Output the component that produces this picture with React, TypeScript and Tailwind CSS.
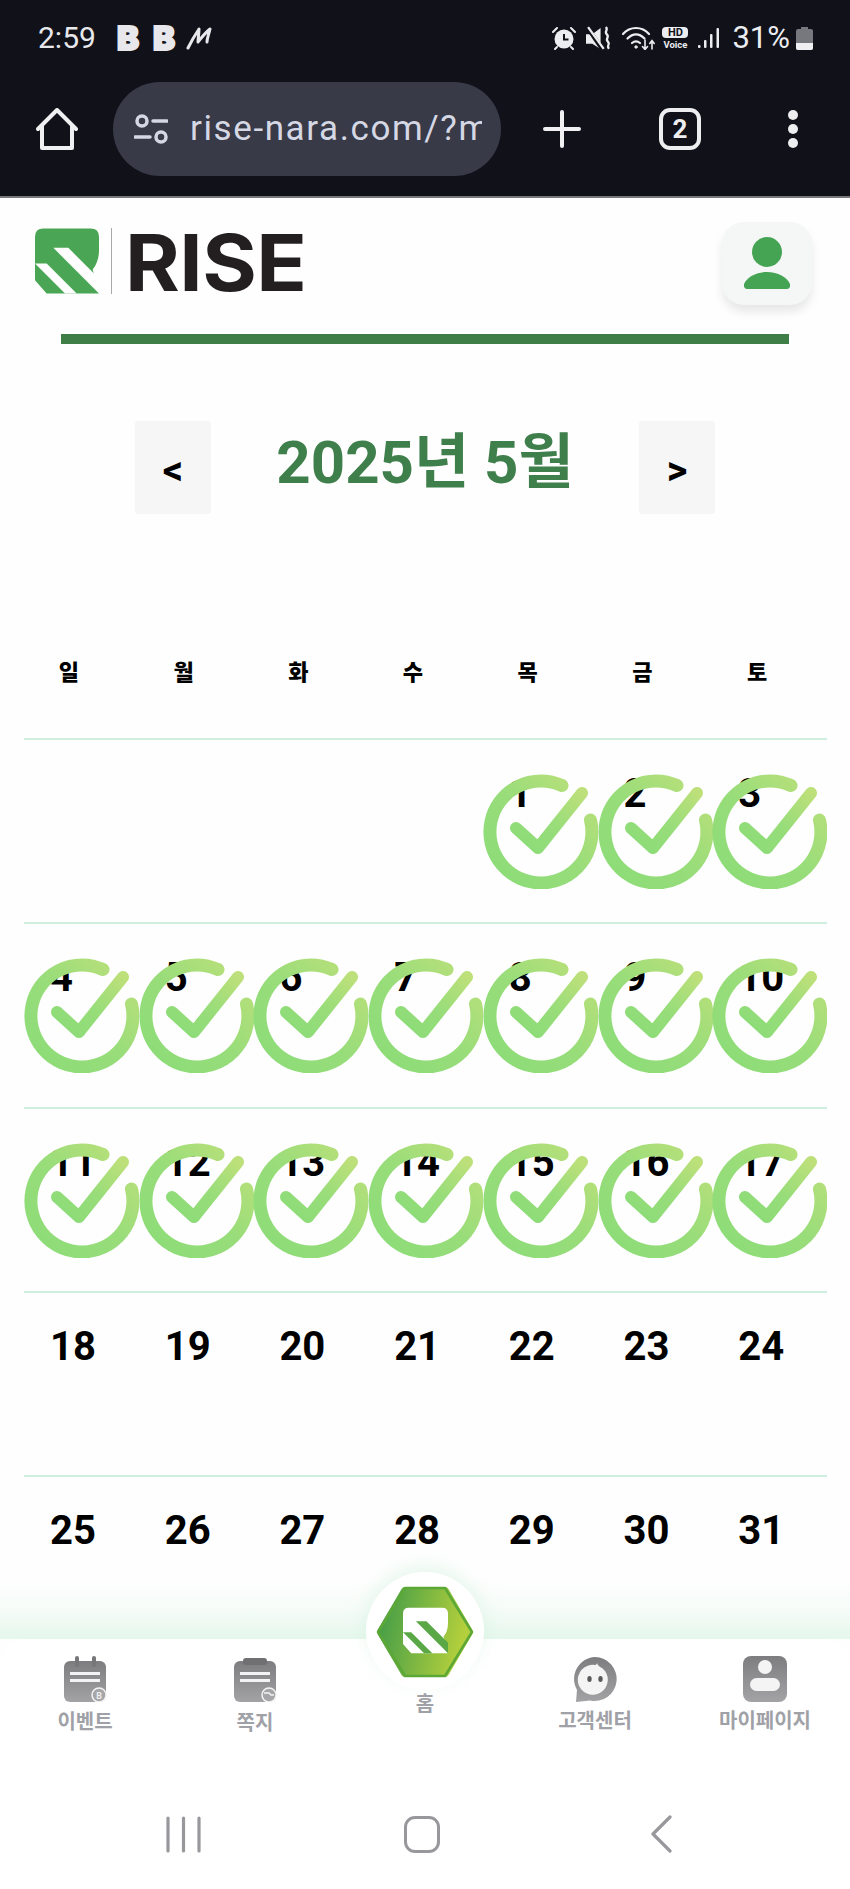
// App.tsx
import React from 'react';

const KR = "font-['Roboto','Noto_Sans_CJK_KR',sans-serif]";

// --- small drawings ---

const RMark = ({ body, stripe, className }: { body: string; stripe: string; className: string }) => (
  <svg viewBox="105 85 192 195" className={className}>
    <path
      d="M105 110Q105 85 130 85H272Q297 85 297 110V150Q297 185 278 208L297 280H140L105 240Z"
      fill={body}
    />
    <path d="M160 143H205L302 240V285Z" fill={stripe} />
    <path d="M105 190H140L230 280H195L105 190Z" fill={stripe} />
  </svg>
);

const CheckMark = () => (
  <svg viewBox="0 0 115 115" className="absolute left-0 top-[34px] w-[115px] h-[115px]" fill="none">
    <defs>
      <linearGradient id="chk" x1="0" y1="1" x2="1" y2="0">
        <stop offset="0" stopColor="#8bdc78" />
        <stop offset="0.5" stopColor="#98dd7a" />
        <stop offset="1" stopColor="#bde07a" />
      </linearGradient>
    </defs>
    <path d="M79 11.500A51 51 0 1 0 107.500 46" stroke="url(#chk)" strokeWidth="13" strokeLinecap="round" />
    <path d="M33 54L55 74L99 19" stroke="url(#chk)" strokeWidth="12" strokeLinecap="round" strokeLinejoin="round" />
  </svg>
);

const StatusIcons = () => (
  <div className="flex items-center">
    {/* alarm */}
    <svg viewBox="0 0 24 24" className="w-[24px] h-[24px]">
      <circle cx="12" cy="13" r="9.500" fill="#ecedf0" />
      <path d="M12 8v5.500h4.500" fill="none" stroke="#11111a" strokeWidth="2" />
      <path d="M1 6l4-4M23 6l-4-4M5 21l-2 2M19 21l2 2" stroke="#ecedf0" strokeWidth="2" strokeLinecap="round" />
    </svg>
    {/* mute + vibrate */}
    <svg viewBox="0 0 24 24" className="w-[25px] h-[25px] ml-[10px]">
      <path d="M0 8h6l8-6v20l-8-5H0Z" fill="#ecedf0" />
      <path d="M1 1l15 22" stroke="#11111a" strokeWidth="4" />
      <path d="M2 1l15 21" stroke="#ecedf0" strokeWidth="2.200" />
      <path d="M19 1c3 3-2 4 1 7s-2 4 1 7-2 3 1 7" fill="none" stroke="#ecedf0" strokeWidth="2.200" />
    </svg>
    {/* wifi */}
    <svg viewBox="0 0 34 24" className="w-[34px] h-[24px] ml-[11px]" fill="none" stroke="#ecedf0" strokeLinecap="round">
      <path d="M1 8C8 0 20 0 27 8" strokeWidth="2.200" />
      <path d="M5.500 12.500C11 7 17 7 22.500 12.500" strokeWidth="2.200" />
      <path d="M10 17c3-2.500 5-2.500 8 0" strokeWidth="2.200" />
      <circle cx="14" cy="21" r="1.200" fill="#ecedf0" />
      <path d="M23 14v9M20.500 20.500l2.500 3 2.500-3M30 23v-8M27.800 17.500l2.200-3 2.200 3" strokeWidth="1.600" />
    </svg>
    {/* HD voice */}
    <div className="ml-[6px] w-[26px] flex flex-col items-center font-['Roboto',sans-serif] font-bold text-[#ecedf0] leading-none">
      <span className="w-[26px] h-[11px] rounded-[4px] bg-[#ecedf0] text-[#11111a] text-[11px] leading-[11px] text-center">HD</span>
      <span className="text-[9.5px] leading-[11px] mt-[1px]">Voice</span>
    </div>
    {/* signal */}
    <svg viewBox="0 0 22 24" className="w-[22px] h-[24px] ml-[10px]" fill="#ecedf0">
      <rect x="0" y="19" width="2.500" height="3" rx="1" />
      <rect x="6" y="14" width="2.500" height="8" rx="1" />
      <rect x="12" y="8" width="2.500" height="14" rx="1" />
      <rect x="18.500" y="2" width="2.500" height="20" rx="1" />
    </svg>
    <span className="ml-[12px] text-[31px] leading-[30px] text-[#ecedf0]">31%</span>
    {/* battery */}
    <svg viewBox="0 0 17 24" className="w-[17px] h-[24px] ml-[6px]">
      <path d="M5 1h7v2h3a2 2 0 0 1 2 2v17a2 2 0 0 1-2 2H2a2 2 0 0 1-2-2V5a2 2 0 0 1 2-2h3Z" fill="#77787d" />
      <path d="M0 17h17v5a2 2 0 0 1-2 2H2a2 2 0 0 1-2-2Z" fill="#f0f0f2" />
    </svg>
  </div>
);

const BrowserChrome = () => (
  <div className="h-[198px] shrink-0 bg-[#11111a] border-b-2 border-[#77777c] font-['Roboto',sans-serif]">
    <div className="h-[82px] pl-[38px] pr-[37px] pb-[6px] flex items-center justify-between">
      <div className="flex items-center text-[#e8e8ec]">
        <span className="text-[30px] leading-[30px] w-[79px]">2:59</span>
        <span className="font-['Inter',sans-serif] font-black text-[33px] leading-[30px] w-[36px] [-webkit-text-stroke:2px_#e8e8ec]">B</span>
        <span className="font-['Inter',sans-serif] font-black text-[33px] leading-[30px] w-[33px] [-webkit-text-stroke:2px_#e8e8ec]">B</span>
        {/* app mark, a pen stroke rather than a letter */}
        <svg viewBox="0 0 28 24" className="w-[28px] h-[24px]" fill="none" stroke="#e8e8ec" strokeWidth="3" strokeLinecap="round" strokeLinejoin="round">
          <path d="M2 22C6 14 9 9 13 3c0 5-1 9-1 13 4-5 7-9 12-13-1 5-3 9-3 13" />
        </svg>
      </div>
      <StatusIcons />
    </div>
    <div className="flex items-center">
      <svg viewBox="0 0 42 42" className="w-[42px] h-[42px] ml-[36px]" fill="none" stroke="#f0f0f3" strokeWidth="4" strokeLinejoin="round" strokeLinecap="round">
        <path d="M2 21L21 2l19 19" />
        <path d="M6 18v22h30V18" />
      </svg>
      <div className="ml-[35px] w-[388px] h-[94px] rounded-[47px] bg-[#383a47] flex items-center pl-[21px] pr-[19px]">
        <svg viewBox="0 0 34 30" className="w-[34px] h-[30px] shrink-0" fill="none" stroke="#d5d8e4" strokeWidth="3.500" strokeLinecap="round">
          <circle cx="8" cy="7" r="5" />
          <path d="M19 7h14M1 23h15" />
          <circle cx="27" cy="23" r="5" />
        </svg>
        <span className="ml-[22px] overflow-hidden whitespace-nowrap text-[35px] leading-[40px] text-[#d5d8e4] tracking-[1.6px]">rise-nara.com/?m</span>
      </div>
      <svg viewBox="0 0 38 38" className="w-[38px] h-[38px] ml-[42px]" stroke="#f0f0f3" strokeWidth="4" strokeLinecap="round">
        <path d="M19 2v34M2 19h34" />
      </svg>
      <div className="ml-[78px] w-[42px] h-[42px] rounded-[11px] border-[4px] border-[#eeeef1] flex items-center justify-center text-[#eeeef1] text-[26px] font-bold leading-none">2</div>
      <div className="ml-[87px] flex flex-col gap-[4px]">
        <span className="w-[10px] h-[10px] rounded-full bg-[#eeeef1]" />
        <span className="w-[10px] h-[10px] rounded-full bg-[#eeeef1]" />
        <span className="w-[10px] h-[10px] rounded-full bg-[#eeeef1]" />
      </div>
    </div>
  </div>
);

const Header = () => (
  <div className="flex items-start justify-between pl-[35px] pr-[38px] pt-[24px] h-[136px] shrink-0">
    <div className="flex items-start pt-[6px]">
      <RMark body="#4aa655" stripe="#fefefe" className="w-[64px] h-[66px]" />
      <div className="w-px h-[66px] bg-[#a9a9a9] ml-[12px]" />
      <span className="ml-[13px] pt-[2px] font-['Inter',sans-serif] font-bold text-[78px] leading-[66px] tracking-[-0.5px] text-[#231f20] scale-x-[1.07] origin-left">RISE</span>
    </div>
    <div className="w-[90px] h-[83px] rounded-[22px] bg-[#f5f6f6] shadow-[0_7px_10px_rgba(0,0,0,0.09)] flex items-center justify-center">
      <svg viewBox="0 0 46 54" className="w-[46px] h-[54px]" fill="#45a454">
        <circle cx="23" cy="15" r="15" />
        <path d="M0 47C3 40 12 35 23 35s20 5 23 12c.5 2-.5 5-3 5H3c-2.500 0-3.500-3-3-5Z" />
      </svg>
    </div>
  </div>
);

const MonthNav = () => (
  <div className="flex items-center justify-between mt-[77px] mx-[135px] shrink-0">
    <button className="w-[76px] h-[93px] rounded-[3px] bg-[#f6f6f6] text-black text-[40px] font-bold leading-none pt-[6px] font-['Roboto',sans-serif]">&lt;</button>
    <h1 className={`${KR} text-[60px] leading-[72px] font-bold text-[#3e7f4b] pb-[10px]`}>2025년 5월</h1>
    <button className="w-[76px] h-[93px] rounded-[3px] bg-[#f6f6f6] text-black text-[40px] font-bold leading-none pt-[6px] font-['Roboto',sans-serif]">&gt;</button>
  </div>
);

const WEEK = ['일', '월', '화', '수', '목', '금', '토'];
const ROWS: (number | null)[][] = [
  [null, null, null, null, 1, 2, 3],
  [4, 5, 6, 7, 8, 9, 10],
  [11, 12, 13, 14, 15, 16, 17],
  [18, 19, 20, 21, 22, 23, 24],
  [25, 26, 27, 28, 29, 30, 31],
];

const Calendar = () => (
  <div className="ml-[24px] w-[803px] shrink-0">
    <div className="grid grid-cols-7 h-[224px] pt-[93px]">
      {WEEK.map((d) => (
        <div key={d} className={`${KR} pr-[25px] text-center text-[22px] font-black leading-[132px] h-[131px] text-black`}>{d}</div>
      ))}
    </div>
    {ROWS.map((row, i) => (
      <div key={i} className="grid grid-cols-7 h-[184.25px] border-t-2 border-[#cfeedd]">
        {row.map((n, j) => (
          <div key={j} className="relative pl-[26px] pt-[30px] text-left font-['Roboto',sans-serif] font-bold text-[40px] leading-[48px] text-black">
            {n}
            {n !== null && n <= 17 && <CheckMark />}
          </div>
        ))}
      </div>
    ))}
  </div>
);

// --- bottom nav icons ---

const GrayGrad = ({ id }: { id: string }) => (
  <defs>
    <linearGradient id={id} x1="0" y1="0" x2="0" y2="1">
      <stop offset="0" stopColor="#7d7d80" />
      <stop offset="1" stopColor="#a3a3a6" />
    </linearGradient>
  </defs>
);

const EventIcon = () => (
  <svg viewBox="-1 0 44 46" className="w-[44px] h-[46px]">
    <GrayGrad id="g1" />
    <rect x="0" y="5" width="42" height="41" rx="6" fill="url(#g1)" />
    <rect x="11" y="0" width="4" height="11" rx="2" fill="#77777a" />
    <rect x="28" y="0" width="4" height="11" rx="2" fill="#77777a" />
    <path d="M6 16h30v3H6ZM6 23h30v3H6Z" fill="#f3f3f3" />
    <circle cx="35" cy="39" r="7" fill="#a6a6a9" stroke="#f3f3f3" strokeWidth="1.500" />
    <text x="35" y="42.500" fontSize="9" fontWeight="700" textAnchor="middle" fill="#eee" fontFamily="Roboto">B</text>
  </svg>
);

const NoteIcon = () => (
  <svg viewBox="-1 0 44 46" className="w-[44px] h-[46px]">
    <GrayGrad id="g2" />
    <rect x="0" y="5" width="42" height="41" rx="6" fill="url(#g2)" />
    <rect x="9" y="2" width="24" height="7" rx="3" fill="#707073" />
    <path d="M6 16h30v3H6ZM6 23h30v3H6Z" fill="#f3f3f3" />
    <circle cx="35" cy="39" r="7" fill="#a6a6a9" stroke="#f3f3f3" strokeWidth="1.500" />
    <path d="M30 37h5l2 2h3" stroke="#f3f3f3" strokeWidth="1.500" fill="none" />
  </svg>
);

const ChatIcon = () => (
  <svg viewBox="0 0 44 46" className="w-[44px] h-[46px]">
    <GrayGrad id="g3" />
    <path d="M22 1a22 22 0 1 1-5 43.500L3 46l1-12A22 22 0 0 1 22 1Z" fill="url(#g3)" />
    <path d="M24 7c1 3 3 4 5 5a15 15 0 1 1-7-3c1 0 2-1 2-2Z" fill="#f4f4f5" />
    <ellipse cx="16.500" cy="23" rx="2.200" ry="3" fill="#59595c" />
    <ellipse cx="27.500" cy="23" rx="2.200" ry="3" fill="#59595c" />
  </svg>
);

const MyIcon = () => (
  <svg viewBox="0 0 44 46" className="w-[44px] h-[46px]">
    <GrayGrad id="g4" />
    <rect x="0" y="0" width="44" height="46" rx="8" fill="url(#g4)" />
    <circle cx="22" cy="11" r="7" fill="#f4f4f5" />
    <rect x="7" y="22" width="30" height="13" rx="6.500" fill="#f4f4f5" />
  </svg>
);

const NavItem = ({ label, icon, drop }: { label: string; icon: React.ReactNode; drop: string }) => (
  <div className="flex flex-col items-center">
    {icon}
    <span className={`${KR} ${drop} text-[20px] leading-[24px] font-bold text-[#a0a1a7]`}>{label}</span>
  </div>
);

const HomeItem = () => (
  <div className="relative flex flex-col items-center">
    <div className="absolute -top-[84px] left-[0px] right-[0px] mx-auto w-[118px] h-[118px] rounded-full bg-white shadow-[0_-6px_18px_rgba(190,235,205,0.35)]" />
    <svg viewBox="-2 -2 100 94" className="relative -mt-[71px] w-[100px] h-[94px]">
      <defs>
        <linearGradient id="hex" x1="0" y1="0" x2="1" y2="0.2">
          <stop offset="0" stopColor="#3f9b48" />
          <stop offset="1" stopColor="#b3cf3c" />
        </linearGradient>
      </defs>
      <path d="M28 4H68L92 45L68 86H28L4 45Z" fill="url(#hex)" stroke="url(#hex)" strokeWidth="8" strokeLinejoin="round" />
      <path d="M28 1H68L95 45L68 89H28L1 45Z" fill="none" stroke="#5ba836" strokeWidth="2.500" strokeLinejoin="round" />
    </svg>
    <RMark body="#ffffff" stripe="#5aa845" className="absolute -top-[49px] w-[45px] h-[47px]" />
    <span className={`${KR} relative mt-[13px] text-[20px] leading-[24px] font-bold text-[#a0a1a7]`}>홈</span>
  </div>
);

const BottomNav = () => (
  <div className="absolute left-0 right-0 bottom-0">
    <div className="h-[60px] bg-gradient-to-b from-[#fefefe] via-[#f6fcf8] via-50% to-[#e5f7ec]" />
    <div className="h-[250px] bg-white rounded-t-[26px] pt-[17px]">
      <div className="grid grid-cols-5 h-[159px]">
        <NavItem label="이벤트" icon={<EventIcon />} drop="mt-[8px]" />
        <NavItem label="쪽지" icon={<NoteIcon />} drop="mt-[9px]" />
        <HomeItem />
        <NavItem label="고객센터" icon={<ChatIcon />} drop="mt-[7px]" />
        <NavItem label="마이페이지" icon={<MyIcon />} drop="mt-[7px]" />
      </div>
      {/* system nav */}
      <div className="flex items-center pl-[166px]">
        <svg viewBox="0 0 35 37" className="w-[35px] h-[37px]" stroke="#98989c" strokeWidth="3.200" strokeLinecap="round">
          <path d="M2 2v33M17.500 2v33M33 2v33" />
        </svg>
        <div className="ml-[203px] w-[36px] h-[37px] rounded-[11px] border-[3.5px] border-[#98989c]" />
        <svg viewBox="0 0 21 38" className="ml-[211px] w-[21px] h-[38px]" fill="none" stroke="#98989c" strokeWidth="3.200" strokeLinecap="round" strokeLinejoin="round">
          <path d="M19 2L2 19l17 17" />
        </svg>
      </div>
    </div>
  </div>
);

export default function App() {
  return (
    <div className="relative w-[850px] h-[1889px] overflow-hidden bg-[#fefefe] flex flex-col">
      <BrowserChrome />
      <Header />
      <div className="ml-[61px] w-[728px] h-[10px] bg-[#3f7f47] shrink-0" />
      <MonthNav />
      <Calendar />
      <BottomNav />
    </div>
  );
}
